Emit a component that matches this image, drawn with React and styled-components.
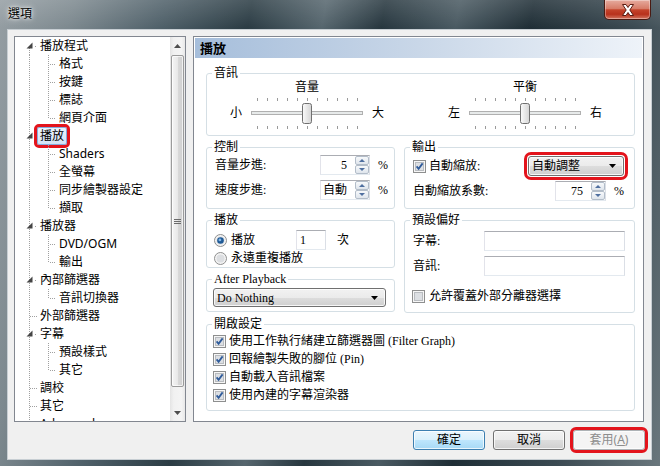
import React from 'react'
import styled, { createGlobalStyle } from 'styled-components'

const PANEL_FONT = '"Liberation Serif", "Noto Sans CJK TC", serif'
const UI_FONT = '"Noto Sans", "Noto Sans CJK TC", sans-serif'
const MARK = '#e3141c'

const GlobalStyle = createGlobalStyle`
  html, body { margin: 0; padding: 0; background: #26363e; }
  body { width: 660px; height: 466px; overflow: hidden; }
`

const treeItems = [
  { text: '播放程式', level: 0, open: true, first: true },
  { text: '格式', level: 1 },
  { text: '按鍵', level: 1 },
  { text: '標誌', level: 1 },
  { text: '網頁介面', level: 1, last: true },
  { text: '播放', level: 0, open: true, selected: true },
  { text: 'Shaders', level: 1 },
  { text: '全螢幕', level: 1 },
  { text: '同步繪製器設定', level: 1 },
  { text: '擷取', level: 1, last: true },
  { text: '播放器', level: 0, open: true },
  { text: 'DVD/OGM', level: 1 },
  { text: '輸出', level: 1, last: true },
  { text: '內部篩選器', level: 0, open: true },
  { text: '音訊切換器', level: 1, last: true },
  { text: '外部篩選器', level: 0 },
  { text: '字幕', level: 0, open: true },
  { text: '預設樣式', level: 1 },
  { text: '其它', level: 1, last: true },
  { text: '調校', level: 0 },
  { text: '其它', level: 0 },
  { text: 'Advanced', level: 0 },
]

const openOptions = [
  '使用工作執行緒建立篩選器圖 (Filter Graph)',
  '回報繪製失敗的腳位 (Pin)',
  '自動載入音訊檔案',
  '使用內建的字幕渲染器',
]

/* ---------- window frame ---------- */

const Window = styled.div`
  width: 660px;
  height: 466px;
  box-sizing: border-box;
  padding: 0 8px 6px 7px;
  display: flex;
  flex-direction: column;
  background:
    linear-gradient(180deg, rgba(255,255,255,0.14) 0, rgba(255,255,255,0) 28px),
    linear-gradient(100deg, #959ea3 0%, #7d898f 10%, #50616a 22%, #2b3c44 34%, #56666e 44%, #27373f 52%, #4a5a62 62%, #1f2e36 72%, #3b4a52 86%, #6a777d 100%);
`

const TitleBar = styled.div`
  height: 29px;
  flex: none;
  display: flex;
  justify-content: space-between;
  align-items: flex-start;
`

const Title = styled.div`
  margin: 6px 0 0 1px;
  font: 12px/16px ${UI_FONT};
  color: #000;
  text-shadow: 0 0 6px rgba(255,255,255,0.95), 0 0 3px rgba(255,255,255,0.9);
`

const CloseButton = styled.div`
  width: 47px;
  height: 20px;
  margin-right: 1px;
  box-sizing: border-box;
  border: 1px solid #4a1a12;
  border-top: none;
  border-radius: 0 0 5px 5px;
  background: linear-gradient(180deg, #e6ab9f 0%, #d77c68 45%, #c4432b 52%, #b8311c 75%, #d27560 100%);
  box-shadow: inset 0 0 0 1px rgba(255,255,255,0.35);
  display: flex;
  align-items: center;
  justify-content: center;
`

const Client = styled.div`
  flex: 1;
  display: flex;
  flex-direction: column;
  background: #f0f0f0;
  border: 1px solid #c7ced3;
  padding: 6px 7px 0 6px;
  font: 12px/14px ${PANEL_FONT};
  color: #000;
`

const Main = styled.div`
  display: flex;
  gap: 7px;
  height: 386px;
  flex: none;
`

/* ---------- tree ---------- */

const Tree = styled.div`
  width: 172px;
  box-sizing: border-box;
  border: 1px solid #828790;
  background: #fff;
  display: flex;
  overflow: hidden;
`

const TreeList = styled.div`
  flex: 1;
  display: flex;
  flex-direction: column;
  overflow: hidden;
  font: 12px/16px ${UI_FONT};
`

const TreeRow = styled.div`
  height: 18px;
  flex: none;
  display: flex;
  align-items: center;
`

const TreeLabel = styled.span`
  border: 1px solid ${p => (p.$selected ? '#84acdd' : 'transparent')};
  background: ${p => (p.$selected ? 'linear-gradient(#ebf3fd, #d3e3f6)' : 'none')};
  border-radius: 2px;
  padding: 0 2px;
  line-height: 16px;
  white-space: nowrap;
  outline: ${p => (p.$selected ? `3px solid ${MARK}` : 'none')};
`

const ScrollBar = styled.div`
  width: 15px;
  flex: none;
  display: flex;
  flex-direction: column;
  background: linear-gradient(90deg, #e4e4e4, #f1f1f1 25%, #f4f4f4 75%, #e8e8e8);
`

const ScrollArrow = styled.div`
  height: 17px;
  flex: none;
  display: flex;
  align-items: center;
  justify-content: center;
`

const ScrollThumb = styled.div`
  height: 332px;
  margin: 1px 1px 0;
  box-sizing: border-box;
  border: 1px solid #9b9b9b;
  border-radius: 2px;
  background: linear-gradient(90deg, #f5f5f5, #e8e8e8 50%, #d9d9d9 51%, #d0d0d0);
  box-shadow: inset 0 0 0 1px rgba(255,255,255,0.7);
  display: flex;
  align-items: center;
  justify-content: center;
`

const ScrollTrack = styled.div`
  flex: 1;
`

function Guides({ level, open, first, last }) {
  const dots = { stroke: '#a0a0a0', strokeDasharray: '1 1' }
  if (level === 0) {
    return (
      <svg width="22" height="18">
        <line x1="14.5" y1={first ? 9 : 0} x2="14.5" y2="18" {...dots} />
        {open ? (
          <>
            <polygon points="17.5,5.5 17.5,11.5 11.5,11.5" fill="#454545" />
            <rect x="20" y="9" width="1" height="1" fill="#a0a0a0" />
          </>
        ) : (
          <line x1="15" y1="9.5" x2="22" y2="9.5" {...dots} />
        )}
      </svg>
    )
  }
  return (
    <svg width="41" height="18">
      <line x1="14.5" y1="0" x2="14.5" y2="18" {...dots} />
      <line x1="33.5" y1="0" x2="33.5" y2={last ? 10 : 18} {...dots} />
      <line x1="35" y1="9.5" x2="41" y2="9.5" {...dots} />
    </svg>
  )
}

function Arrow({ dir, color = '#4d4d4d', w = 7, h = 4 }) {
  const pts = dir === 'up' ? `0,${h} ${w / 2},0 ${w},${h}` : `0,0 ${w / 2},${h} ${w},0`
  return (
    <svg width={w} height={h}>
      <polygon points={pts} fill={color} />
    </svg>
  )
}

/* ---------- options panel ---------- */

const Panel = styled.div`
  flex: 1;
  box-sizing: border-box;
  border: 1px solid #828790;
  background: #fff;
  padding: 1px;
  display: flex;
  flex-direction: column;
`

const PanelHeader = styled.div`
  height: 20px;
  flex: none;
  padding-left: 5px;
  background: linear-gradient(90deg, #a6bedb, #c9d7e8 50%, #eef3f9);
  font: bold 13px/20px ${UI_FONT};
  color: #000;
`

const Content = styled.div`
  display: flex;
  flex-direction: column;
  gap: 4px;
  padding: 8px 7px 0 11px;
`

const Columns = styled.div`
  display: flex;
  gap: 9px;
`

const Column = styled.div`
  width: ${p => p.$w}px;
  display: flex;
  flex-direction: column;
  gap: ${p => p.$gap}px;
`

const Group = styled.fieldset`
  margin: 0;
  padding: 0 ${p => p.$right ?? 8}px 0 8px;
  min-width: 0;
  box-sizing: border-box;
  height: ${p => p.$h}px;
  border: 1px solid #d5dfe5;
  border-radius: 3px;
`

const Legend = styled.legend`
  margin-left: -3px;
  padding: 0 2px;
  font-size: 12px;
  line-height: 14px;
  height: 14px;
`

const Sliders = styled.div`
  display: flex;
  gap: 64px;
  margin-left: 15px;
`

const SliderUnit = styled.div`
  display: flex;
  flex-direction: column;
  align-items: center;
  gap: 2px;
`

const SliderRow = styled.div`
  display: flex;
  align-items: center;
  gap: 9px;
`

const SideLabel = styled.span`
  width: 12px;
  line-height: 14px;
`

const FormGrid = styled.div`
  display: grid;
  grid-template-columns: ${p => p.$cols};
  grid-auto-rows: 20px;
  row-gap: ${p => p.$gap}px;
  column-gap: 8px;
  align-items: center;
  padding-top: ${p => p.$top}px;
`

const Row = styled.div`
  display: flex;
  align-items: center;
  height: ${p => p.$h}px;
  gap: ${p => p.$gap ?? 0}px;
  margin-top: ${p => p.$mt ?? 0}px;
  margin-left: ${p => p.$ml ?? 0}px;
  justify-content: ${p => p.$justify ?? 'flex-start'};
`

const Choice = styled.label`
  display: flex;
  align-items: center;
  gap: ${p => p.$gap ?? 5}px;
  width: ${p => (p.$w ? `${p.$w}px` : 'auto')};
  flex: ${p => (p.$grow ? 1 : 'none')};
  white-space: nowrap;
`

const TextBox = styled.div`
  width: ${p => p.$w}px;
  height: 20px;
  box-sizing: border-box;
  border: 1px solid;
  border-color: #abadb3 #dbdfe6 #e3e9ef #e2e3ea;
  background: #fff;
  line-height: 18px;
  padding: 0 3px;
`

const SpinBox = styled.div`
  width: ${p => p.$w}px;
  height: 20px;
  box-sizing: border-box;
  display: flex;
  border: 1px solid;
  border-color: #abadb3 #dbdfe6 #e3e9ef #e2e3ea;
  background: #fff;
`

const SpinValue = styled.span`
  flex: 1;
  text-align: right;
  padding-right: 8px;
  line-height: 18px;
`

const SpinButtons = styled.div`
  width: 14px;
  display: flex;
  flex-direction: column;
`

const SpinButton = styled.div`
  flex: 1;
  border: 1px solid #b3bdc9;
  border-radius: 2px;
  background: linear-gradient(#f7f9fb, #dfe5ec);
  display: flex;
  align-items: center;
  justify-content: center;
`

const Combo = styled.div`
  width: ${p => p.$w}px;
  height: ${p => p.$h}px;
  box-sizing: border-box;
  margin-left: ${p => p.$ml ?? 0}px;
  border: 1px solid #707070;
  border-radius: 3px;
  background: linear-gradient(#f2f2f2 0%, #ebebeb 50%, #dddddd 51%, #cfcfcf 100%);
  box-shadow: inset 0 0 0 1px rgba(255,255,255,0.8);
  display: flex;
  align-items: center;
  justify-content: space-between;
  padding: 0 7px 0 3px;
  font-family: ${p => (p.$sans ? UI_FONT : PANEL_FONT)};
  outline: ${p => (p.$marked ? `3px solid ${MARK}` : 'none')};
  outline-offset: 1px;
`

const Unit = styled.span`
  width: 10px;
  flex: none;
`

/* ---------- buttons ---------- */

const ButtonBar = styled.div`
  display: flex;
  justify-content: flex-end;
  gap: 8px;
  margin-top: 8px;
  margin-right: -1px;
`

const PushButton = styled.div`
  width: 72px;
  height: 20px;
  box-sizing: border-box;
  border: 1px solid ${p => (p.$default ? '#3c7fb1' : p.$disabled ? '#adb2b5' : '#707070')};
  border-radius: 3px;
  background: ${p =>
    p.$default
      ? 'linear-gradient(#eaf6fd 0%, #d9f0fc 50%, #bee6fd 51%, #a7d9f5 100%)'
      : p.$disabled
        ? '#f4f4f4'
        : 'linear-gradient(#f2f2f2 0%, #ebebeb 50%, #dddddd 51%, #cfcfcf 100%)'};
  box-shadow: inset 0 0 0 1px rgba(255,255,255,0.75);
  color: ${p => (p.$disabled ? '#8d8d8d' : '#000')};
  font: 12px/18px ${UI_FONT};
  text-align: center;
  outline: ${p => (p.$marked ? `3px solid ${MARK}` : 'none')};
`

/* ---------- small drawn controls ---------- */

function CheckBox({ checked }) {
  return (
    <svg width="13" height="13">
      <rect x="0.5" y="0.5" width="12" height="12" fill="#f6f6f6" stroke="#8e8f8f" />
      <rect x="2.5" y="2.5" width="8" height="8" fill="#dcdfe3" stroke="#b9bcc0" />
      {checked && <path d="M3.6 6.4 L5.6 8.8 L9.6 3.4" fill="none" stroke="#2f5b9a" strokeWidth="1.8" />}
    </svg>
  )
}

function Radio({ on }) {
  return (
    <svg width="13" height="13">
      <circle cx="6.5" cy="6.5" r="6" fill="#f3f3f3" stroke="#8e8f8f" />
      <circle cx="6.5" cy="6.5" r="4" fill="#dcdee1" />
      {on && (
        <>
          <circle cx="6.5" cy="6.5" r="3.3" fill="#1f5a96" />
          <circle cx="5.9" cy="5.9" r="1.4" fill="#86b8e6" />
        </>
      )}
    </svg>
  )
}

function Trackbar({ id }) {
  const ticks = Array.from({ length: 11 }, (_, i) => 6.5 + i * 10)
  return (
    <svg width="112" height="34">
      <defs>
        <linearGradient id={id} x1="0" y1="0" x2="1" y2="0">
          <stop offset="0" stopColor="#fbfbfb" />
          <stop offset="1" stopColor="#d4d4d4" />
        </linearGradient>
      </defs>
      {ticks.map(x => (
        <g key={x} stroke="#9a9a9a">
          <line x1={x} y1="2" x2={x} y2="5" />
          <line x1={x} y1="30" x2={x} y2="33" />
        </g>
      ))}
      <rect x="0.5" y="15.5" width="111" height="3" fill="#e7eaea" stroke="#b0b0b0" />
      <rect x="51.5" y="7.5" width="9" height="20" rx="2" fill={`url(#${id})`} stroke="#707070" />
    </svg>
  )
}

function Spin({ value, w = 50 }) {
  return (
    <SpinBox $w={w}>
      <SpinValue>{value}</SpinValue>
      <SpinButtons>
        <SpinButton><Arrow dir="up" color="#4f6f9f" w={6} h={3} /></SpinButton>
        <SpinButton><Arrow dir="down" color="#4f6f9f" w={6} h={3} /></SpinButton>
      </SpinButtons>
    </SpinBox>
  )
}

function Slider({ caption, left, right, id }) {
  return (
    <SliderUnit>
      <span>{caption}</span>
      <SliderRow>
        <SideLabel>{left}</SideLabel>
        <Trackbar id={id} />
        <SideLabel>{right}</SideLabel>
      </SliderRow>
    </SliderUnit>
  )
}

export default function App() {
  return (
    <>
      <GlobalStyle />
      <Window>
        <TitleBar>
          <Title>選項</Title>
          <CloseButton>
            <svg width="14" height="12">
              <path d="M1.5 0.5 H5 L7 3.5 L9 0.5 H12.5 L8.8 6 L12.5 11.5 H9 L7 8.5 L5 11.5 H1.5 L5.2 6 Z" fill="#fff" stroke="#5b1c12" strokeWidth="1" />
            </svg>
          </CloseButton>
        </TitleBar>

        <Client>
          <Main>
            <Tree>
              <TreeList>
                {treeItems.map((item, i) => (
                  <TreeRow key={i}>
                    <Guides {...item} />
                    <TreeLabel $selected={item.selected}>{item.text}</TreeLabel>
                  </TreeRow>
                ))}
              </TreeList>
              <ScrollBar>
                <ScrollArrow><Arrow dir="up" /></ScrollArrow>
                <ScrollThumb>
                  <svg width="7" height="7" stroke="#6b6b6b">
                    <line x1="0" y1="1.5" x2="7" y2="1.5" />
                    <line x1="0" y1="3.5" x2="7" y2="3.5" />
                    <line x1="0" y1="5.5" x2="7" y2="5.5" />
                  </svg>
                </ScrollThumb>
                <ScrollTrack />
                <ScrollArrow><Arrow dir="down" /></ScrollArrow>
              </ScrollBar>
            </Tree>

            <Panel>
              <PanelHeader>播放</PanelHeader>
              <Content>
                <Group $h={70}>
                  <Legend>音訊</Legend>
                  <Sliders>
                    <Slider caption="音量" left="小" right="大" id="volThumb" />
                    <Slider caption="平衡" left="左" right="右" id="balThumb" />
                  </Sliders>
                </Group>

                <Columns>
                  <Column $w={189} $gap={4}>
                    <Group $h={69}>
                      <Legend>控制</Legend>
                      <FormGrid $cols="97px auto auto" $gap={5} $top={1}>
                        <span>音量步進:</span>
                        <Spin value="5" />
                        <span>%</span>
                        <span>速度步進:</span>
                        <Spin value="自動" />
                        <span>%</span>
                      </FormGrid>
                    </Group>

                    <Group $h={55}>
                      <Legend>播放</Legend>
                      <Row $h={20} $mt={3} $ml={-1}>
                        <Choice $w={82} $gap={4}><Radio on />播放</Choice>
                        <TextBox $w={30}>1</TextBox>
                        <span style={{ marginLeft: 11 }}>次</span>
                      </Row>
                      <Row $h={16} $ml={-1}>
                        <Choice $gap={4}><Radio />永遠重複播放</Choice>
                      </Row>
                    </Group>

                    <Group $h={40}>
                      <Legend>After Playback</Legend>
                      <Row $h={19} $mt={2} $ml={-2}>
                        <Combo $w={174} $h={19}>
                          <span>Do Nothing</span>
                          <Arrow dir="down" color="#000" w={7} h={4} />
                        </Combo>
                      </Row>
                    </Group>
                  </Column>

                  <Column $w={231} $gap={4}>
                    <Group $h={69} $right={10}>
                      <Legend>輸出</Legend>
                      <Row $h={20} $mt={2} $justify="space-between">
                        <Choice $gap={3}><CheckBox checked />自動縮放:</Choice>
                        <Combo $w={96} $h={20} $sans $marked>
                          <span>自動調整</span>
                          <Arrow dir="down" color="#000" w={7} h={4} />
                        </Combo>
                      </Row>
                      <Row $h={20} $mt={5}>
                        <Choice $grow>自動縮放系數:</Choice>
                        <Spin value="75" w={51} />
                        <Unit style={{ marginLeft: 8 }}>%</Unit>
                      </Row>
                    </Group>

                    <Group $h={100} $right={10}>
                      <Legend>預設偏好</Legend>
                      <FormGrid $cols="63px 141px" $gap={5} $top={4}>
                        <span>字幕:</span>
                        <TextBox $w={141} />
                        <span>音訊:</span>
                        <TextBox $w={141} />
                      </FormGrid>
                      <Row $h={14} $mt={13} $ml={-1}>
                        <Choice $gap={4}><CheckBox />允許覆蓋外部分離器選擇</Choice>
                      </Row>
                    </Group>
                  </Column>
                </Columns>

                <Group $h={94}>
                  <Legend>開啟設定</Legend>
                  <div style={{ paddingTop: 1 }}>
                    {openOptions.map(text => (
                      <Row key={text} $h={18} $ml={-2}>
                        <Choice $gap={3}><CheckBox checked />{text}</Choice>
                      </Row>
                    ))}
                  </div>
                </Group>
              </Content>
            </Panel>
          </Main>

          <ButtonBar>
            <PushButton $default>確定</PushButton>
            <PushButton>取消</PushButton>
            <PushButton $disabled $marked>套用(<u>A</u>)</PushButton>
          </ButtonBar>
        </Client>
      </Window>
    </>
  )
}
